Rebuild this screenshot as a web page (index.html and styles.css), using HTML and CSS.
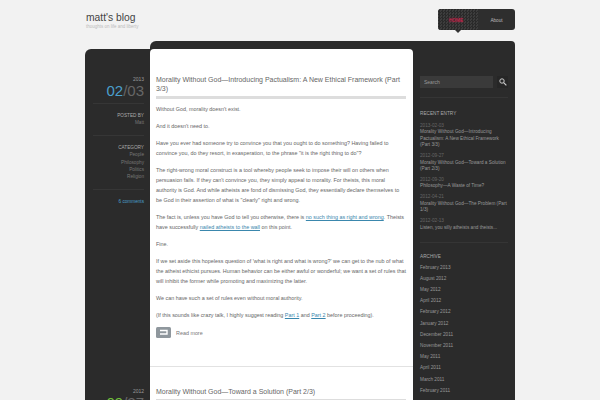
FILE: index.html
```html
<!DOCTYPE html>
<html lang="en">
<head>
  <meta charset="UTF-8">
  <title>matt's blog</title>
  <link rel="stylesheet" href="styles.css">
</head>
<body>

<div class="page">
  <header class="top">
    <div class="brand">
      <h1>matt's blog</h1>
      <p>thoughts on life and liberty</p>
    </div>
    <nav class="nav">
      <a class="nav-item current" href="#">HOME</a>
      <a class="nav-item" href="#">About</a>
    </nav>
  </header>

  <div class="shell">
    <div class="posts">
      <section class="post">
        <aside class="meta">
          <div class="year">2013</div>
          <div class="date"><b>02</b>/03</div>
          <div class="meta-block">
            <h4>POSTED BY</h4>
            <div>Matt</div>
          </div>
          <div class="meta-block">
            <h4>CATEGORY</h4>
            <div>People</div>
            <div>Philosophy</div>
            <div>Politics</div>
            <div>Religion</div>
          </div>
          <div class="meta-block"><a class="comments" href="#">6 comments</a></div>
        </aside>
        <div class="post-frame">
          <article class="article">
            <h2>Morality Without God—Introducing Pactualism: A New Ethical Framework (Part 3/3)</h2>
            <p>Without God, morality doesn't exist.</p>
            <p>And it doesn't need to.</p>
            <p>Have you ever had someone try to convince you that you ought to do something? Having failed to convince you, do they resort, in exasperation, to the phrase "it is the right thing to do"?</p>
            <p>The right-wrong moral construct is a tool whereby people seek to impose their will on others when persuasion fails. If they can't convince you, they simply appeal to morality. For theists, this moral authority is God. And while atheists are fond of dismissing God, they essentially declare themselves to be God in their assertion of what is "clearly" right and wrong.</p>
            <p>The fact is, unless you have God to tell you otherwise, there is <a href="#">no such thing as right and wrong</a>. Theists have successfully <a href="#">nailed atheists to the wall</a> on this point.</p>
            <p>Fine.</p>
            <p>If we set aside this hopeless question of 'what is right and what is wrong?' we can get to the nub of what the atheist ethicist pursues. Human behavior can be either awful or wonderful; we want a set of rules that will inhibit the former while promoting and maximizing the latter.</p>
            <p>We can have such a set of rules even without moral authority.</p>
            <p>(If this sounds like crazy talk, I highly suggest reading <a href="#">Part 1</a> and <a href="#">Part 2</a> before proceeding).</p>
            <a class="more" href="#">
              <svg width="15" height="11" viewBox="0 0 15 11"><rect width="15" height="11" rx="1.5" fill="#8f979d"/><path d="M4 3.5h7v3.5H4" fill="none" stroke="#fff" stroke-width="1.4"/></svg>
              Read more
            </a>
          </article>
        </div>
      </section>

      <section class="post">
        <aside class="meta">
          <div class="year">2012</div>
          <div class="date green"><b>09</b>/27</div>
        </aside>
        <div class="post-frame">
          <article class="article">
            <h2>Morality Without God—Toward a Solution (Part 2/3)</h2>
          </article>
        </div>
      </section>
    </div>

    <aside class="side">
      <form class="search">
        <input type="text" value="Search">
        <button type="button" aria-label="Search">
          <svg width="8" height="8" viewBox="0 0 8 8"><circle cx="3" cy="3" r="2.2" fill="none" stroke="#ccc"/><path d="M4.6 4.6L7.4 7.4" stroke="#ccc" stroke-width="1.2"/></svg>
        </button>
      </form>

      <div class="widget">
        <h3>RECENT ENTRY</h3>
        <ul class="recent">
          <li><span>2013-02-03</span>Morality Without God—Introducing Pactualism: A New Ethical Framework (Part 3/3)</li>
          <li><span>2012-09-27</span>Morality Without God—Toward a Solution (Part 2/3)</li>
          <li><span>2012-09-20</span>Philosophy—A Waste of Time?</li>
          <li><span>2012-04-21</span>Morality Without God—The Problem (Part 1/3)</li>
          <li><span>2012-02-13</span>Listen, you silly atheists and theists...</li>
        </ul>
      </div>

      <div class="widget">
        <h3>ARCHIVE</h3>
        <ul class="archive">
          <li>February 2013</li>
          <li>August 2012</li>
          <li>May 2012</li>
          <li>April 2012</li>
          <li>February 2012</li>
          <li>January 2012</li>
          <li>December 2011</li>
          <li>November 2011</li>
          <li>May 2011</li>
          <li>April 2011</li>
          <li>March 2011</li>
          <li>February 2011</li>
        </ul>
      </div>
    </aside>
  </div>
</div>

</body>
</html>
```

FILE: styles.css
```css
html, body {
  margin: 0;
  height: 400px;
  overflow: hidden;
}

body {
  font-family: "Liberation Sans", Arial, sans-serif;
  font-size: 5.4px;
  line-height: 10px;
  background: #f2f2f2;
  color: #666;
}

a {
  color: inherit;
  text-decoration: none;
}

ul {
  list-style: none;
  margin: 0;
  padding: 0;
}

.page {
  width: 430px;
  height: 400px;
  overflow: hidden;
  margin-left: 85px;
}

/* header */
.top {
  display: flex;
  justify-content: space-between;
  height: 41px;
  padding-top: 9px;
  box-sizing: border-box;
}

.brand {
  padding: 3px 0 0 1px;
}

.brand h1 {
  margin: 0;
  font-size: 10.3px;
  line-height: 11px;
  font-weight: normal;
  color: #444;
}

.brand p {
  margin: 0;
  font-size: 4.5px;
  line-height: 7px;
  color: #bbb;
}

.nav {
  display: flex;
  width: 77px;
  height: 21px;
  background: #2e2e2e;
  border-radius: 3px;
  font-size: 4.7px;
}

.nav-item {
  flex: 1;
  position: relative;
  text-align: center;
  line-height: 23px;
  color: #bbb;
}

.nav-item.current {
  flex: 0 0 36px;
  padding-right: 4px;
  color: #c8244c;
  text-shadow: 0 0 2px #c8244c;
  border-radius: 3px 0 0 3px;
  background: repeating-conic-gradient(#2a2a2a 0 25%, #3d3d3d 0 50%) 0 0 / 3px 3px;
}

.nav-item.current::after {
  content: "";
  position: absolute;
  left: 17px;
  top: 21px;
  border: 3px solid transparent;
  border-top-color: #333;
}

/* main frame */
.shell {
  display: flex;
  align-items: flex-start;
}

.posts {
  width: 328px;
  flex: none;
}

.post {
  display: grid;
  grid-template-columns: 65px 263px;
}

.post:first-child .meta {
  margin-top: 8px;
  padding-top: 26px;
  border-top-left-radius: 6px;
}

.post:first-child .post-frame {
  padding-top: 8px;
  border-top-left-radius: 6px;
}

.post:first-child .article {
  height: 317px;
  border-radius: 4px 4px 0 0;
}

.post + .post .article {
  border-top: 1px solid #e2e2e2;
  padding-top: 20px;
}

.post + .post .meta {
  padding-top: 21px;
}

.meta {
  background: #2b2b2b;
  padding-right: 6px;
  text-align: right;
  color: #777;
  font-size: 4.7px;
  line-height: 7.4px;
}

.year {
  color: #999;
  font-size: 5px;
  line-height: 8px;
}

.date {
  font-size: 15px;
  line-height: 16px;
  margin-bottom: 4px;
  color: #666;
}

.date b {
  font-weight: normal;
  color: #4a9fcb;
}

.date.green b {
  color: #6fbf3a;
}

.meta-block {
  padding: 8px 0;
  border-top: 1px solid #363636;
  margin-left: 8px;
}

.meta-block h4 {
  margin: 0;
  font-size: 4.7px;
  font-weight: normal;
  color: #aaa;
}

.comments {
  color: #4a9fcb;
}

.post-frame {
  background: #2b2b2b;
}

.article {
  background: #fff;
  padding: 26px 7px 0 6px;
  box-sizing: border-box;
}

.article h2 {
  margin: 0 0 5px;
  padding-bottom: 3px;
  font-size: 7px;
  line-height: 9px;
  font-weight: normal;
  color: #666;
  border-bottom: 3px solid #ddd;
}

.article p {
  margin: 0 0 7px;
}

.article p a {
  color: #3a87ad;
  text-decoration: underline;
}

.more {
  display: flex;
  align-items: center;
  gap: 5px;
  margin-top: 2px;
  color: #777;
}

/* right column */
.side {
  width: 102px;
  height: 359px;
  box-sizing: border-box;
  background: #2b2b2b;
  border-top-right-radius: 4px;
  padding: 35px 7px 0;
  color: #999;
  font-size: 4.7px;
  line-height: 6.4px;
}

.search {
  display: flex;
  gap: 4px;
  padding-bottom: 9px;
  border-bottom: 1px solid #353535;
}

.search input {
  flex: 1;
  min-width: 0;
  height: 12px;
  box-sizing: border-box;
  border: 0;
  padding: 0 4px;
  background: #3a3a3a;
  color: #999;
  font: 5px "Liberation Sans", Arial, sans-serif;
}

.search button {
  width: 11px;
  height: 12px;
  border: 0;
  padding: 0;
  background: #262626;
  display: flex;
  align-items: center;
  justify-content: center;
}

.widget {
  padding: 12px 0 6px;
  border-bottom: 1px solid #353535;
}

.widget:last-child {
  padding-top: 10px;
  border-bottom: 0;
}

.widget h3 {
  margin: 0 0 1px;
  font-size: 4.7px;
  line-height: 8px;
  font-weight: normal;
  color: #aaa;
}

.recent {
  margin-top: 5px;
}

.recent li {
  margin-bottom: 4.6px;
}

.recent span {
  display: block;
  color: #666;
}

.archive li {
  line-height: 11.2px;
}
```
